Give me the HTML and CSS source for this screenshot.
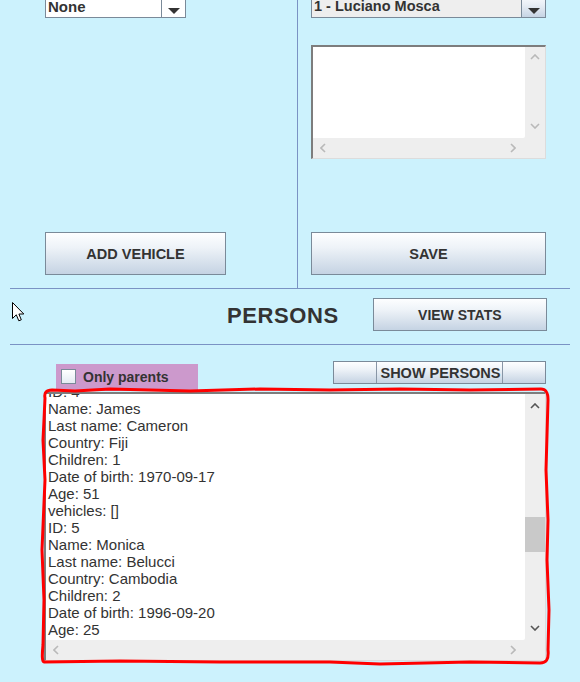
FILE: index.html
```html
<!DOCTYPE html>
<html>
<head>
<meta charset="utf-8">
<link rel="stylesheet" href="styles.css">
</head>
<body>
<div class="app">
  <section class="top">
    <div class="col col-left">
      <div class="combo combo-left">
        <span class="combo-val">None</span>
        <span class="combo-arrow"></span>
      </div>
      <button class="btn btn-add">ADD VEHICLE</button>
    </div>
    <div class="vline"></div>
    <div class="col col-right">
      <div class="combo combo-right">
        <span class="combo-val">1 - Luciano Mosca</span>
        <span class="combo-arrow"></span>
      </div>
      <div class="pane pane-small">
        <div class="viewport"></div>
        <div class="vbar">
          <svg class="chev" width="10" height="6" viewBox="0 0 10 6"><path d="M1 5 L5 1 L9 5" /></svg>
          <svg class="chev" width="10" height="6" viewBox="0 0 10 6"><path d="M1 1 L5 5 L9 1" /></svg>
        </div>
        <div class="hbar">
          <svg class="chev" width="6" height="10" viewBox="0 0 6 10"><path d="M5 1 L1 5 L5 9" /></svg>
          <svg class="chev" width="6" height="10" viewBox="0 0 6 10"><path d="M1 1 L5 5 L1 9" /></svg>
        </div>
        <div class="corner"></div>
      </div>
      <button class="btn btn-save">SAVE</button>
    </div>
  </section>
  <hr class="sep">
  <section class="persons-bar">
    <svg class="cursor" width="13" height="21" viewBox="0 0 13 21"><path d="M0.5 0.5 L0.5 16.5 L4.3 12.8 L6.8 18.8 L9.3 17.8 L6.9 12 L11.8 12 Z" fill="#fff" stroke="#000" stroke-width="1"/></svg>
    <h2 class="title">PERSONS</h2>
    <button class="btn btn-stats">VIEW STATS</button>
  </section>
  <hr class="sep">
  <section class="controls">
    <label class="parents"><span class="checkbox"></span>Only parents</label>
    <button class="btn btn-show"><span class="btn-show-text">SHOW PERSONS</span></button>
  </section>
  <div class="pane-wrap">
    <div class="pane pane-big">
      <div class="viewport">
        <div class="lines">
          <div>ID: 4</div>
          <div>Name: James</div>
          <div>Last name: Cameron</div>
          <div>Country: Fiji</div>
          <div>Children: 1</div>
          <div>Date of birth: 1970-09-17</div>
          <div>Age: 51</div>
          <div>vehicles: []</div>
          <div>ID: 5</div>
          <div>Name: Monica</div>
          <div>Last name: Belucci</div>
          <div>Country: Cambodia</div>
          <div>Children: 2</div>
          <div>Date of birth: 1996-09-20</div>
          <div>Age: 25</div>
          <div>vehicles: []</div>
        </div>
      </div>
      <div class="vbar active">
        <svg class="chev" width="10" height="6" viewBox="0 0 10 6"><path d="M1 5 L5 1 L9 5" /></svg>
        <span class="thumb"></span>
        <svg class="chev" width="10" height="6" viewBox="0 0 10 6"><path d="M1 1 L5 5 L9 1" /></svg>
      </div>
      <div class="hbar">
        <svg class="chev" width="6" height="10" viewBox="0 0 6 10"><path d="M5 1 L1 5 L5 9" /></svg>
        <svg class="chev" width="6" height="10" viewBox="0 0 6 10"><path d="M1 1 L5 5 L1 9" /></svg>
      </div>
      <div class="corner"></div>
    </div>
    <svg class="outline" width="520" height="290" viewBox="0 0 520 290">
      <g transform="translate(-38 -384)">
        <path d="M45 398 C44 393 46 390 52 390 L75 391 L110 389 L190 391 L260 389 L330 390 L400 389 L470 390 L541 389 C546 389 548 392 548 400 L546 470 L548 520 L547 560 L549 610 L548 650 C549 660 546 663 540 663 L470 662 L380 664 L330 662 L220 662 L120 661 L44 662 C42 662 42 655 43 645 L44 600 L42 550 L45 480 L43 440 L44 420 Z" fill="none" stroke="#ff0000" stroke-width="3" stroke-linejoin="round"/>
      </g>
    </svg>
  </div>
</div>
</body>
</html>
```
FILE: styles.css
```css
* { box-sizing: border-box; }
html, body { margin: 0; padding: 0; }
body {
  background: #ccf2fd;
  font-family: "Liberation Sans", Arial, sans-serif;
  color: #333333;
  width: 580px;
  height: 682px;
  overflow: hidden;
}
.app { padding-top: 1px; margin-top: -1px; }

.top { display: flex; margin-top: -6px; height: 294px; }
.col { display: flex; flex-direction: column; }
.col-left { width: 297px; padding: 0 0 13px 45px; justify-content: space-between; }
.vline { width: 1px; background: #7a93c4; }
.col-right { flex: 1; padding: 0 0 13px 13px; }

.combo { display: flex; height: 24px; border: 1px solid #7a8a99; }
.combo-left { width: 141px; }
.combo-right { width: 235px; }
.combo-val {
  flex: 1;
  background: #ffffff;
  font-weight: bold;
  font-size: 15px;
  line-height: 23px;
  padding-left: 2px;
  white-space: nowrap;
  overflow: hidden;
}
.combo-right .combo-val { background: #eeeeee; font-size: 14.5px; }
.combo-arrow {
  width: 24px;
  border-left: 1px solid #7a8a99;
  background: #ffffff;
  display: flex;
  align-items: center;
  justify-content: center;
  padding-top: 9px;
}
.combo-right .combo-arrow { background: linear-gradient(#fbfcfe, #e8eef5 45%, #c6d4e4); }
.combo-arrow::before {
  content: "";
  border-left: 6px solid transparent;
  border-right: 6px solid transparent;
  border-top: 6px solid #333333;
}

.btn {
  font-family: inherit;
  font-weight: bold;
  font-size: 14.5px;
  color: #333333;
  border: 1px solid #7a8a99;
  background: linear-gradient(#fdfeff, #eef3f8 35%, #c5d3e3);
  padding: 0;
  margin: 0;
}
.btn-add { width: 181px; height: 43px; }
.btn-save { width: 235px; height: 43px; margin-top: auto; }
.btn-stats { width: 174px; height: 33px; font-size: 14px; margin-top: 9px; }

.pane {
  display: grid;
  grid-template-columns: 1fr 20px;
  grid-template-rows: 1fr 20px;
  border-style: solid;
  border-width: 2px 1px 1px 2px;
  border-color: #7d7d7d #dcdcdc #dcdcdc #7d7d7d;
  background: #eeeeee;
}
.pane-small { width: 235px; height: 114px; margin-top: 27px; }
.viewport { background: #ffffff; overflow: hidden; border-bottom-right-radius: 2px; }
.vbar {
  display: flex;
  flex-direction: column;
  align-items: center;
  justify-content: space-between;
  padding: 7px 0 9px;
  background: #eeeeee;
}
.hbar {
  display: flex;
  align-items: center;
  justify-content: space-between;
  padding: 0 9px 0 7px;
  background: #eeeeee;
}
.corner { background: #eeeeee; }
.chev path { fill: none; stroke: #b9b9b9; stroke-width: 1.6; }
.vbar.active .chev path { stroke: #555555; }

.sep { margin: 0 10px; border: 0; height: 1px; background: #7a93c4; }

.persons-bar { position: relative; display: flex; height: 55px; }
.cursor { position: absolute; left: 12px; top: 13px; }
.title {
  margin: 14px 34px 0 227px;
  font-size: 22px;
  line-height: 26px;
  letter-spacing: 0.6px;
  font-weight: bold;
  color: #333333;
}

.controls { display: flex; height: 47px; padding-top: 16px; }
.parents {
  display: flex;
  align-items: center;
  margin: 3px 0 0 56px;
  width: 142px;
  height: 27px;
  background: #cc99cc;
  padding: 0 0 2px 5px;
  font-weight: bold;
  font-size: 14px;
}
.checkbox {
  width: 15px;
  height: 15px;
  border: 1px solid #7a8a99;
  background: linear-gradient(#ffffff, #e4ebf3);
  margin-right: 7px;
}
.btn-show {
  margin-left: 135px;
  width: 213px;
  height: 23px;
  display: flex;
  justify-content: center;
  align-items: stretch;
}
.btn-show-text {
  display: flex;
  align-items: center;
  border-left: 1px solid #8896a6;
  border-right: 1px solid #8896a6;
  white-space: nowrap;
  padding: 0 1px 0 3px;
}

.pane-wrap { position: relative; margin-left: 44px; width: 502px; }
.pane-big { width: 502px; height: 269px; }
.lines {
  margin-top: -11px;
  padding-left: 2px;
  font-size: 15px;
  line-height: 17px;
  color: #333333;
}
.pane-big .vbar { padding: 9px 0 9px; }
.thumb { width: 20px; height: 35px; background: #c9c9c9; margin-top: 108px; margin-bottom: auto; }
.pane-big .hbar { padding: 0 9px 0 7px; }

.outline { position: absolute; left: -6px; top: -8px; pointer-events: none; overflow: visible; }
```
